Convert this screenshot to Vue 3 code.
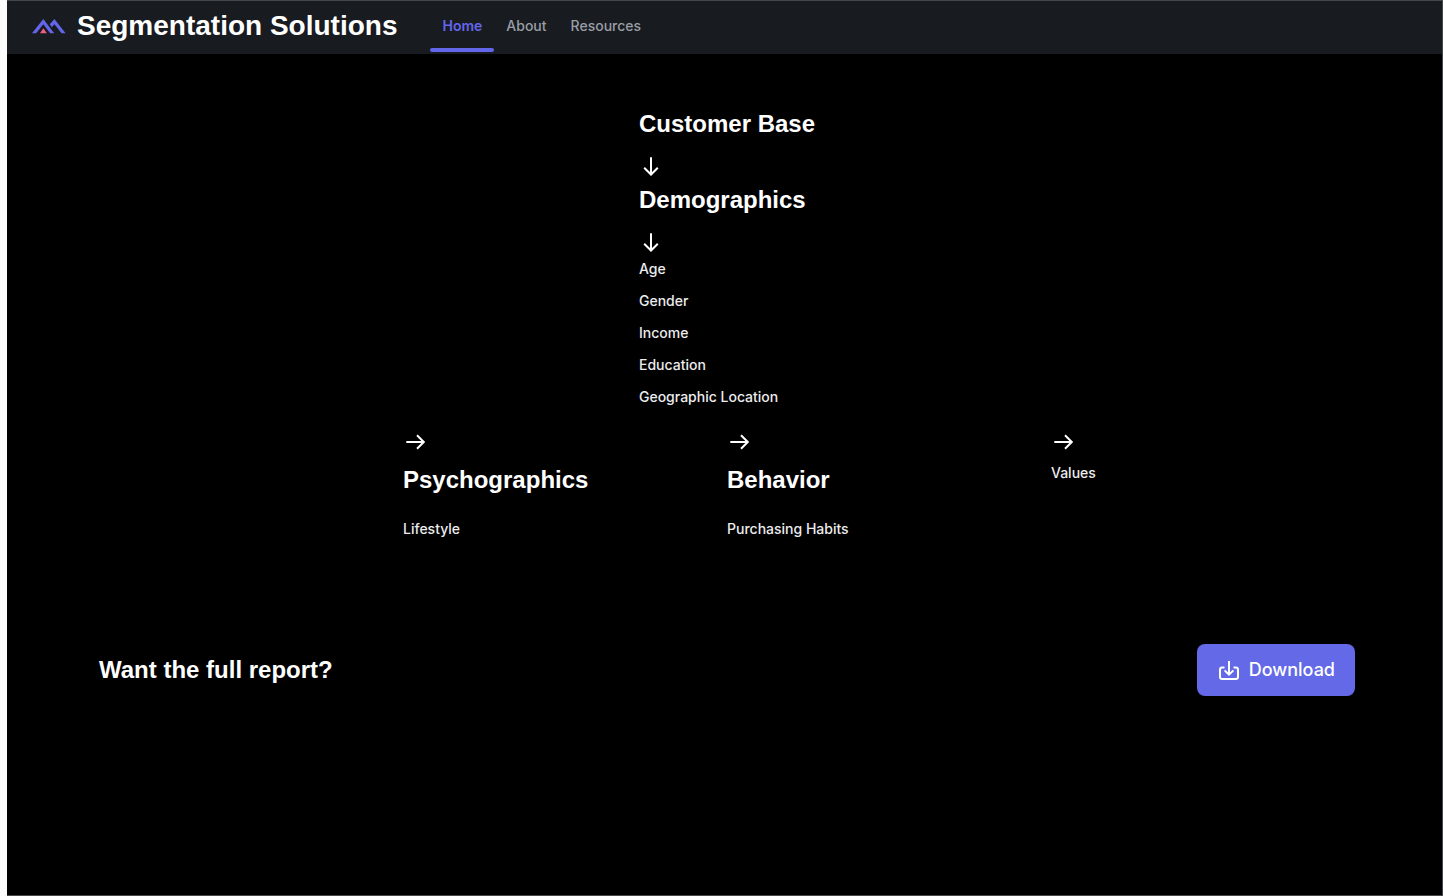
<script setup>
const nav = [
  { label: 'Home', active: true },
  { label: 'About', active: false },
  { label: 'Resources', active: false },
]
const demographics = ['Age', 'Gender', 'Income', 'Education', 'Geographic Location']
const segments = [
  { title: 'Psychographics', item: 'Lifestyle' },
  { title: 'Behavior', item: 'Purchasing Habits' },
  { title: '', item: 'Values' },
]
</script>

<template>
  <div class="frame">
    <header class="topbar">
      <svg class="logo" viewBox="0 0 34 16" aria-hidden="true">
        <path d="M0 15.2 L11.3 1 L22.2 15.2 H18.2 L11.3 6.2 L4.2 15.2 Z" fill="#6366ea" />
        <path d="M17.8 6.2 L22.4 1 L33.6 15.2 H29.6 L22.4 6.2 L19.8 9.2 Z" fill="#6366ea" />
        <path d="M8 15.2 L11.3 10.3 L14.9 15.2 Z" fill="#ef5d85" />
      </svg>
      <h1 class="brand">Segmentation Solutions</h1>
      <nav class="tabs" aria-label="Main">
        <a v-for="n in nav" :key="n.label" href="#" class="tab" :class="{ active: n.active }">{{ n.label }}</a>
      </nav>
    </header>

    <main class="content">
      <section class="flow">
        <h2>Customer Base</h2>
        <svg class="arrow down" viewBox="0 0 24 24" aria-hidden="true"><path d="M12 3.3V20.5M5.2 13.8L12 20.5L18.8 13.8" /></svg>
        <h2>Demographics</h2>
        <svg class="arrow down" viewBox="0 0 24 24" aria-hidden="true"><path d="M12 3.3V20.5M5.2 13.8L12 20.5L18.8 13.8" /></svg>
        <ul class="list">
          <li v-for="d in demographics" :key="d">{{ d }}</li>
        </ul>
      </section>

      <section class="segments">
        <div v-for="s in segments" :key="s.item" class="segment">
          <svg class="arrow" viewBox="0 0 24 24" aria-hidden="true"><path d="M3.3 12H20.8M14 5.2L20.8 12L14 18.8" /></svg>
          <h2 v-if="s.title">{{ s.title }}</h2>
          <p>{{ s.item }}</p>
        </div>
      </section>

      <section class="report">
        <h2>Want the full report?</h2>
        <button type="button" class="download">
          <svg class="icon" viewBox="0 0 24 24" aria-hidden="true">
            <path d="M12 3V16.5M7.6 12.4L12 16.7L16.4 12.4M7.5 9.5H5.2Q3 9.5 3 11.7V18.8Q3 21 5.2 21H18.8Q21 21 21 18.8V11.7Q21 9.5 18.8 9.5H16.5" />
          </svg>
          Download
        </button>
      </section>
    </main>
  </div>
</template>

<style>
body {
  background: #fcfcfc;
}
</style>

<style scoped>
.frame {
  box-sizing: border-box;
  min-height: 100vh;
  margin-left: 7px;
  border: 1px solid #45484b;
  border-left: 0;
  background: #000;
  color: #fff;
  font-family: Inter, "Liberation Sans", sans-serif;
}
h1, h2, p, ul {
  margin: 0;
  padding: 0;
}
.topbar {
  box-sizing: border-box;
  display: flex;
  align-items: center;
  height: 53px;
  padding: 0 0 4px 25px;
  background: #181b20;
}
.logo {
  width: 34px;
  height: 16px;
}
.brand {
  margin-left: 11px;
  font: 700 28px/36px "Liberation Sans", Arial, sans-serif;
}
.tabs {
  display: flex;
  align-self: stretch;
  margin-left: 33px;
}
.tab {
  position: relative;
  display: flex;
  align-items: center;
  padding: 0 12px;
  color: #9a9ea6;
  font-size: 14px;
  font-weight: 500;
  text-decoration: none;
}
.tab.active {
  color: #6366ea;
  font-weight: 600;
}
.tab.active::after {
  content: "";
  position: absolute;
  left: 0;
  right: 0;
  bottom: -2px;
  height: 4px;
  border-radius: 2px;
  background: #6366ea;
}
.content {
  padding: 52px 87px 0 92px;
}
h2 {
  font: 700 24px/36px "Liberation Sans", Arial, sans-serif;
}
.arrow {
  display: block;
  width: 24px;
  height: 24px;
  fill: none;
  stroke: #fff;
  stroke-width: 2;
}
.flow {
  width: max-content;
  margin: 0 auto;
}
.arrow.down {
  margin: 12px 0 4px;
}
.list {
  display: grid;
  gap: 10px;
  list-style: none;
}
.list li, .segment p {
  color: #ececee;
  font-size: 14px;
  font-weight: 500;
  line-height: 22px;
}
.segments {
  display: grid;
  grid-template-columns: 324px 324px auto;
  margin-top: 22px;
  padding-left: calc(50% - 324px);
}
.segment .arrow {
  margin-bottom: 8px;
}
.segment h2 {
  margin-bottom: 20px;
}
.report {
  display: flex;
  align-items: center;
  justify-content: space-between;
  margin-top: 104px;
}
.download {
  display: flex;
  align-items: center;
  gap: 8px;
  height: 52px;
  padding: 0 20px;
  border: 0;
  border-radius: 8px;
  background: #6369e7;
  color: #fff;
  font: 500 18px/28px Inter, "Liberation Sans", sans-serif;
}
.icon {
  width: 24px;
  height: 24px;
  fill: none;
  stroke: currentColor;
  stroke-width: 2;
}
</style>
